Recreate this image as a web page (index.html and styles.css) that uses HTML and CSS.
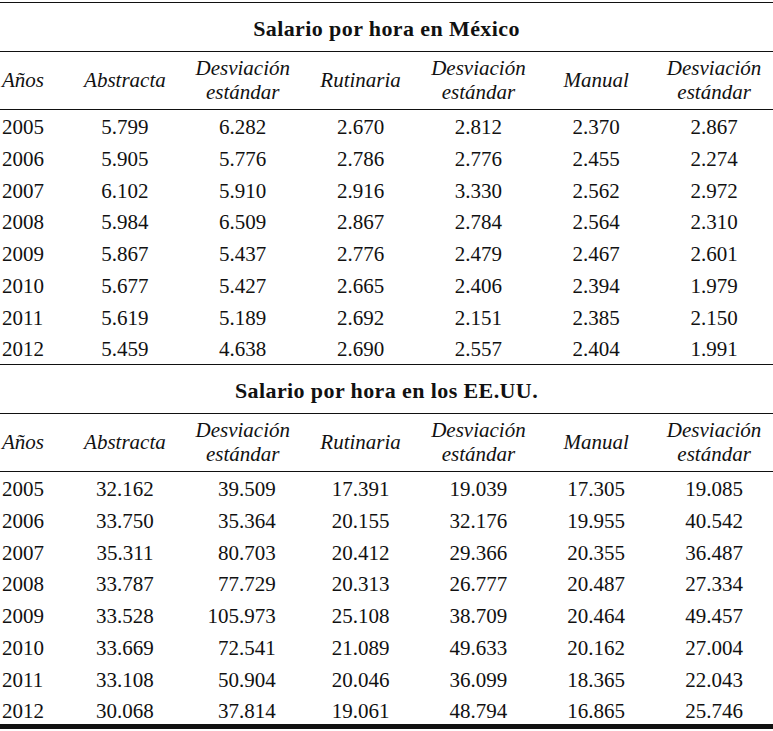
FILE: index.html
```html
<!DOCTYPE html>
<html lang="es">
<head>
<meta charset="utf-8">
<title>Salario por hora</title>
<link rel="stylesheet" href="styles.css">
</head>
<body>
<table class="wages">
  <colgroup>
    <col class="c-year"><col class="c-num"><col class="c-num"><col class="c-num"><col class="c-num"><col class="c-num"><col class="c-num">
  </colgroup>
  <tbody>
    <tr><td class="title first" colspan="7">Salario por hora en México</td></tr>
    <tr class="head">
      <td class="year">Años</td><td>Abstracta</td><td>Desviación<br>estándar</td><td>Rutinaria</td><td>Desviación<br>estándar</td><td>Manual</td><td>Desviación<br>estándar</td>
    </tr>
    <tr class="row"><td class="year">2005</td><td>5.799</td><td>6.282</td><td>2.670</td><td>2.812</td><td>2.370</td><td>2.867</td></tr>
    <tr class="row"><td class="year">2006</td><td>5.905</td><td>5.776</td><td>2.786</td><td>2.776</td><td>2.455</td><td>2.274</td></tr>
    <tr class="row"><td class="year">2007</td><td>6.102</td><td>5.910</td><td>2.916</td><td>3.330</td><td>2.562</td><td>2.972</td></tr>
    <tr class="row"><td class="year">2008</td><td>5.984</td><td>6.509</td><td>2.867</td><td>2.784</td><td>2.564</td><td>2.310</td></tr>
    <tr class="row"><td class="year">2009</td><td>5.867</td><td>5.437</td><td>2.776</td><td>2.479</td><td>2.467</td><td>2.601</td></tr>
    <tr class="row"><td class="year">2010</td><td>5.677</td><td>5.427</td><td>2.665</td><td>2.406</td><td>2.394</td><td>1.979</td></tr>
    <tr class="row"><td class="year">2011</td><td>5.619</td><td>5.189</td><td>2.692</td><td>2.151</td><td>2.385</td><td>2.150</td></tr>
    <tr class="row mid-end"><td class="year">2012</td><td>5.459</td><td>4.638</td><td>2.690</td><td>2.557</td><td>2.404</td><td>1.991</td></tr>

    <tr><td class="title" colspan="7">Salario por hora en los EE.UU.</td></tr>
    <tr class="head">
      <td class="year">Años</td><td>Abstracta</td><td>Desviación<br>estándar</td><td>Rutinaria</td><td>Desviación<br>estándar</td><td>Manual</td><td>Desviación<br>estándar</td>
    </tr>
    <tr class="row us"><td class="year">2005</td><td>32.162</td><td>39.509</td><td>17.391</td><td>19.039</td><td>17.305</td><td>19.085</td></tr>
    <tr class="row us"><td class="year">2006</td><td>33.750</td><td>35.364</td><td>20.155</td><td>32.176</td><td>19.955</td><td>40.542</td></tr>
    <tr class="row us"><td class="year">2007</td><td>35.311</td><td>80.703</td><td>20.412</td><td>29.366</td><td>20.355</td><td>36.487</td></tr>
    <tr class="row us"><td class="year">2008</td><td>33.787</td><td>77.729</td><td>20.313</td><td>26.777</td><td>20.487</td><td>27.334</td></tr>
    <tr class="row us"><td class="year">2009</td><td>33.528</td><td>105.973</td><td>25.108</td><td>38.709</td><td>20.464</td><td>49.457</td></tr>
    <tr class="row us"><td class="year">2010</td><td>33.669</td><td>72.541</td><td>21.089</td><td>49.633</td><td>20.162</td><td>27.004</td></tr>
    <tr class="row us"><td class="year">2011</td><td>33.108</td><td>50.904</td><td>20.046</td><td>36.099</td><td>18.365</td><td>22.043</td></tr>
    <tr class="row us last"><td class="year">2012</td><td>30.068</td><td>37.814</td><td>19.061</td><td>48.794</td><td>16.865</td><td>25.746</td></tr>
  </tbody>
</table>
</body>
</html>
```

FILE: styles.css
```css
html, body {
  margin: 0;
  padding: 0;
  background: #ffffff;
}

body {
  font-family: "Liberation Serif", "Times New Roman", serif;
  color: #111111;
}

.wages {
  width: 773px;
  margin-top: 2px;
  table-layout: fixed;
  border-collapse: separate;
  border-spacing: 0;
}

.c-year { width: 66px; }

.wages td {
  padding: 0;
  text-align: center;
  white-space: nowrap;
}

.wages td.year {
  text-align: left;
  padding-left: 2px;
}

.wages td.title {
  font-weight: bold;
  font-size: 22px;
  letter-spacing: 0.4px;
  line-height: 22px;
  padding: 15px 0 11px;
  border-bottom: 1px solid #111;
}

.wages td.title.first {
  border-top: 1px solid #111;
}

.head td {
  font-style: italic;
  font-size: 21px;
  line-height: 24.3px;
  padding: 4px 0 4.5px;
  vertical-align: middle;
  border-bottom: 1px solid #111;
}

.row td {
  font-size: 21px;
  line-height: 21px;
  padding: 7px 0 3.75px;
  vertical-align: top;
}

.row.us td:nth-child(3) {
  text-align: right;
  padding-right: 26px;
}

.row.mid-end td {
  border-bottom: 1px solid #111;
}

.row.last td {
  padding-bottom: 1.75px;
  border-bottom: 5px solid #111;
}
```
